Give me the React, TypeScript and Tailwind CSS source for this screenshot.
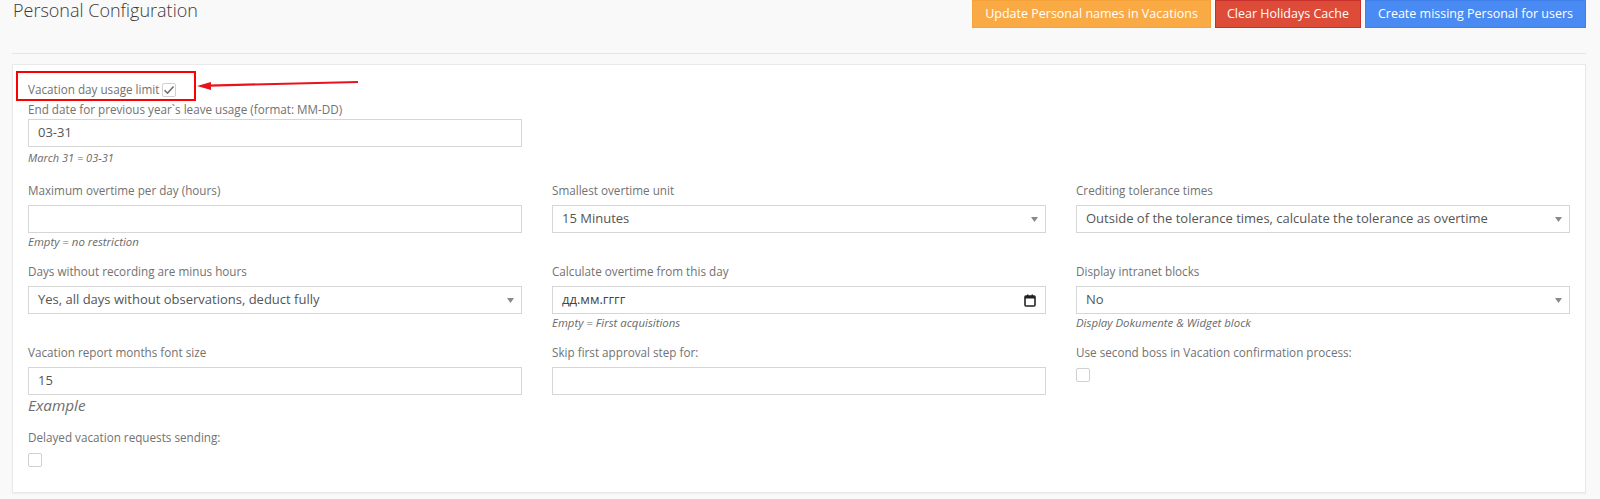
import React from "react";

const font = { fontFamily: '"Open Sans", "Liberation Sans", sans-serif' };

function Label({ children }: { children: React.ReactNode }) {
  return <div className="text-[11.7px] leading-[17px] text-[#727272] mb-[6px]">{children}</div>;
}

function Help({ children }: { children: React.ReactNode }) {
  return <div className="text-[11.4px] leading-[16px] italic text-[#6a6a6a] mt-[1px]">{children}</div>;
}

function TextBox({ value = "" }: { value?: string }) {
  return (
    <div className="h-[28px] border border-[#d6d6d6] bg-white flex items-center px-[9px] text-[13px] text-[#555]">
      {value}
    </div>
  );
}

function SelectBox({ value }: { value: string }) {
  return (
    <div className="h-[28px] border border-[#d6d6d6] bg-white flex items-center justify-between pl-[9px] pr-[7px] text-[13px] text-[#555]">
      <span>{value}</span>
      <svg width="7" height="5" viewBox="0 0 7 5">
        <path d="M0 0 L7 0 L3.5 5 Z" fill="#8a8a8a" />
      </svg>
    </div>
  );
}

function DateBox() {
  return (
    <div className="h-[28px] border border-[#d6d6d6] bg-white flex items-center justify-between pl-[9px] pr-[9px] text-[13px] text-[#444]">
      <span>дд.мм.гггг</span>
      <svg width="12" height="13" viewBox="0 0 12 13">
        <rect x="1" y="2" width="10" height="10" rx="1" fill="none" stroke="#222" strokeWidth="1.6" />
        <rect x="1" y="2" width="10" height="2.5" fill="#222" />
        <rect x="3" y="0.5" width="1.4" height="2" fill="#222" />
        <rect x="7.6" y="0.5" width="1.4" height="2" fill="#222" />
      </svg>
    </div>
  );
}

function Check({ checked = false }: { checked?: boolean }) {
  return (
    <div className="w-[14px] h-[14px] border border-[#d0d0d0] rounded-[2px] bg-white flex items-center justify-center">
      {checked && (
        <svg width="12" height="10" viewBox="0 0 12 10">
          <path d="M1.5 5.2 L4.5 8.2 L10.5 1.5" fill="none" stroke="#6f6f6f" strokeWidth="1.6" />
        </svg>
      )}
    </div>
  );
}

export default function App() {
  return (
    <div className="min-h-[499px] bg-[#f9f9f9] pl-[12px] pr-[14px]" style={font}>
      <div className="flex items-start justify-between h-[28px]">
        <h3 className="pl-[1px] text-[18px] leading-[20px] font-light text-[#3a3a3a]">
          Personal Configuration
        </h3>
        <div className="flex gap-[4px]">
          <button className="h-[28px] px-[12px] bg-[#f9aa45] border border-[#f5a338] text-white text-[12.5px]">
            Update Personal names in Vacations
          </button>
          <button className="h-[28px] px-[11px] bg-[#dd4b39] border border-[#c9302c] text-white text-[12.5px]">
            Clear Holidays Cache
          </button>
          <button className="h-[28px] px-[12px] bg-[#4a8af3] border border-[#3f80ea] text-white text-[12.5px]">
            Create missing Personal for users
          </button>
        </div>
      </div>
      <div className="mt-[25px] h-[1px] bg-[#e5e5e5]" />
      <div className="relative mt-[10px] bg-white border border-[#e9e9e9] shadow-[0_1px_1px_rgba(0,0,0,0.04)] pt-[16px] pb-[25px]">
        <div className="absolute left-[3px] top-[6px] w-[180px] h-[30px] border-2 border-[#ff0000]" />
        <svg className="absolute left-[182px] top-[11px]" width="168" height="18" viewBox="0 0 168 18">
          <path d="M14 9.6 L163 6" stroke="#e8141b" strokeWidth="2.2" />
          <path d="M2 10 L16 6 L16 14 Z" fill="#e8141b" />
        </svg>

        <div className="px-[15px]">
          <div className="flex items-center h-[17px]">
            <span className="text-[11.7px] leading-[17px] text-[#727272]">Vacation day usage limit</span>
            <span className="ml-[3px]">
              <Check checked />
            </span>
          </div>
          <div className="mt-[3px] text-[11.7px] leading-[17px] text-[#727272] mb-[1px]">
            End date for previous year`s leave usage (format: MM-DD)
          </div>
          <div className="w-[494px]">
            <TextBox value="03-31" />
          </div>
          <div className="text-[11px] leading-[16px] italic text-[#6a6a6a] mt-[3px]">March 31 = 03-31</div>
        </div>

        <div className="grid grid-cols-3 mt-[16px]">
          <div className="px-[15px] mb-[13px]">
            <Label>Maximum overtime per day (hours)</Label>
            <TextBox />
            <Help>Empty = no restriction</Help>
          </div>
          <div className="px-[15px] mb-[13px]">
            <Label>Smallest overtime unit</Label>
            <SelectBox value="15 Minutes" />
          </div>
          <div className="px-[15px] mb-[13px]">
            <Label>Crediting tolerance times</Label>
            <SelectBox value="Outside of the tolerance times, calculate the tolerance as overtime" />
          </div>

          <div className="px-[15px] mb-[13px]">
            <Label>Days without recording are minus hours</Label>
            <SelectBox value="Yes, all days without observations, deduct fully" />
          </div>
          <div className="px-[15px] mb-[13px]">
            <Label>Calculate overtime from this day</Label>
            <DateBox />
            <Help>Empty = First acquisitions</Help>
          </div>
          <div className="px-[15px] mb-[13px]">
            <Label>Display intranet blocks</Label>
            <SelectBox value="No" />
            <Help>Display Dokumente &amp; Widget block</Help>
          </div>

          <div className="px-[15px]">
            <Label>Vacation report months font size</Label>
            <TextBox value="15" />
            <div className="text-[15.3px] leading-[21px] italic text-[#6e6e6e]">Example</div>
            <div className="mt-[13px]">
              <Label>Delayed vacation requests sending:</Label>
              <div className="mt-[7px]">
                <Check />
              </div>
            </div>
          </div>
          <div className="px-[15px]">
            <Label>Skip first approval step for:</Label>
            <TextBox />
          </div>
          <div className="px-[15px]">
            <Label>Use second boss in Vacation confirmation process:</Label>
            <div className="mt-[7px]">
              <Check />
            </div>
          </div>
        </div>
      </div>
    </div>
  );
}
